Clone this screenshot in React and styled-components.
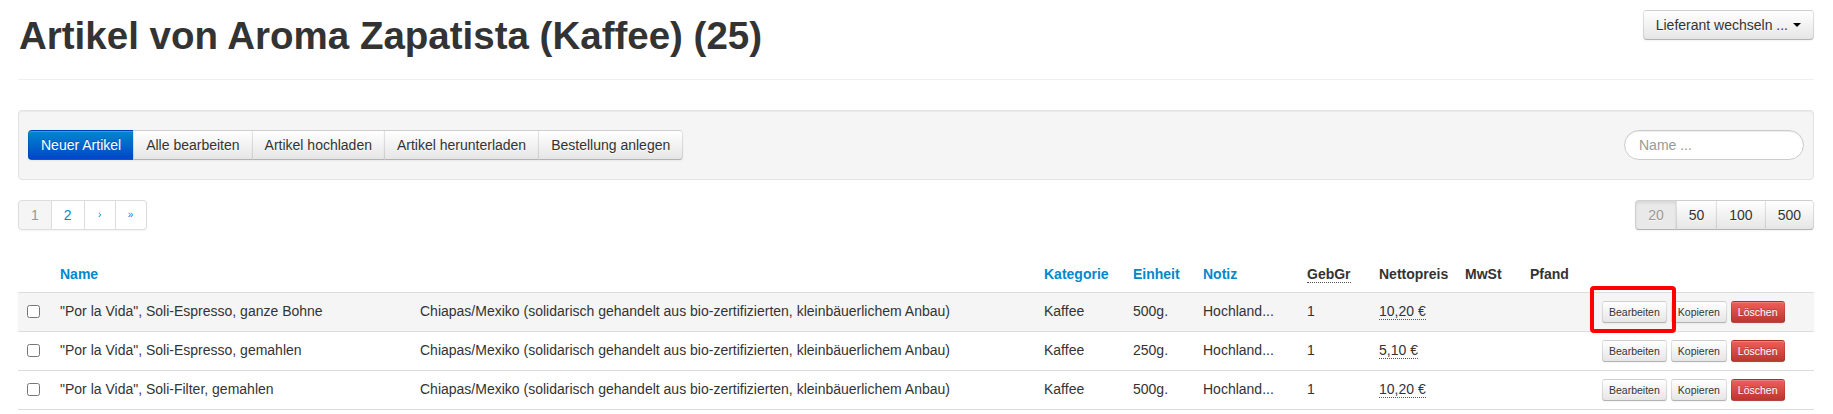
import React from "react";
import styled, { createGlobalStyle, css } from "styled-components";

const GlobalStyle = createGlobalStyle`
  body {
    margin: 0;
    font-family: "Liberation Sans", Arial, Helvetica, sans-serif;
    font-size: 14px;
    line-height: 20px;
    color: #333;
    background: #fff;
  }
`;

const Page = styled.div`
  padding: 0 19px 0 18px;
`;

const Header = styled.div`
  display: flex;
  justify-content: space-between;
  align-items: flex-start;
  padding-bottom: 23px;
  margin-bottom: 30px;
  border-bottom: 1px solid #eee;
`;

const Title = styled.h1`
  margin: 16px 0 0 1px;
  font-size: 38.5px;
  line-height: 40px;
  font-weight: bold;
  color: #333;
`;

const Btn = styled.button`
  display: inline-flex;
  align-items: center;
  gap: 4px;
  font-family: inherit;
  font-size: 14px;
  line-height: 20px;
  padding: 4px 12px;
  color: #333;
  text-shadow: 0 1px 1px rgba(255, 255, 255, 0.75);
  background-color: #f5f5f5;
  background-image: linear-gradient(to bottom, #ffffff, #e6e6e6);
  border: 1px solid #ccc;
  border-color: rgba(0, 0, 0, 0.1) rgba(0, 0, 0, 0.1) rgba(0, 0, 0, 0.25);
  border-bottom-color: #b3b3b3;
  border-radius: 4px;
  box-shadow: inset 0 1px 0 rgba(255, 255, 255, 0.2), 0 1px 2px rgba(0, 0, 0, 0.05);
  white-space: nowrap;
  cursor: pointer;

  ${(p) =>
    p.$variant === "primary" &&
    css`
      color: #fff;
      text-shadow: 0 -1px 0 rgba(0, 0, 0, 0.25);
      background-color: #006dcc;
      background-image: linear-gradient(to bottom, #0088cc, #0044cc);
      border-color: rgba(0, 0, 0, 0.1) rgba(0, 0, 0, 0.1) rgba(0, 0, 0, 0.25);
    `}

  ${(p) =>
    p.$variant === "danger" &&
    css`
      color: #fff;
      text-shadow: 0 -1px 0 rgba(0, 0, 0, 0.25);
      background-color: #da4f49;
      background-image: linear-gradient(to bottom, #ee5f5b, #bd362f);
      border-color: rgba(0, 0, 0, 0.1) rgba(0, 0, 0, 0.1) rgba(0, 0, 0, 0.25);
    `}

  ${(p) =>
    p.$active &&
    css`
      color: #999;
      background-color: #e9e9e9;
      background-image: none;
      box-shadow: inset 0 2px 3px rgba(0, 0, 0, 0.08), 0 1px 2px rgba(0, 0, 0, 0.05);
    `}

  ${(p) =>
    p.$mini &&
    css`
      padding: 0 6px;
      font-size: 10.5px;
      border-radius: 3px;
    `}
`;

const Caret = styled.span`
  display: inline-block;
  width: 0;
  height: 0;
  border-top: 4px solid #000;
  border-left: 4px solid transparent;
  border-right: 4px solid transparent;
  margin-left: 1px;
`;

const SupplierBtn = styled(Btn)`
  margin-top: 10px;
`;

const Group = styled.div`
  display: flex;

  & > * {
    border-radius: 0;
  }
  & > * + * {
    margin-left: -1px;
  }
  & > *:first-child {
    border-top-left-radius: 4px;
    border-bottom-left-radius: 4px;
  }
  & > *:last-child {
    border-top-right-radius: 4px;
    border-bottom-right-radius: 4px;
  }
`;

const Well = styled.div`
  display: flex;
  justify-content: space-between;
  align-items: center;
  padding: 19px 9px;
  margin-bottom: 20px;
  background: #f5f5f5;
  border: 1px solid #e3e3e3;
  border-radius: 4px;
  box-shadow: inset 0 1px 1px rgba(0, 0, 0, 0.05);
`;

const Search = styled.input`
  box-sizing: border-box;
  width: 180px;
  height: 30px;
  padding: 4px 14px;
  font-family: inherit;
  font-size: 14px;
  line-height: 20px;
  color: #555;
  background: #fff;
  border: 1px solid #ccc;
  border-radius: 15px;
  box-shadow: inset 0 1px 1px rgba(0, 0, 0, 0.075);
  outline: none;

  &::placeholder {
    color: #999;
  }
`;

const NavRow = styled.div`
  display: flex;
  justify-content: space-between;
  align-items: center;
  margin-bottom: 26px;
`;

const Pagination = styled.ul`
  display: flex;
  margin: 0;
  padding: 0;
  list-style: none;
  border-radius: 4px;
  box-shadow: 0 1px 2px rgba(0, 0, 0, 0.05);
`;

const PageLink = styled.li`
  height: 20px;
  padding: 4px 12px;
  line-height: 20px;
  border: 1px solid #ddd;
  border-left-width: 0;
  font-size: ${(p) => (p.$arrow ? "10px" : "14px")};
  min-width: ${(p) => (p.$arrow ? "6px" : "auto")};
  text-align: center;
  color: ${(p) => (p.$active ? "#999" : "#0088cc")};
  background: ${(p) => (p.$active ? "#f5f5f5" : "#fff")};

  &:first-child {
    border-left-width: 1px;
    border-radius: 4px 0 0 4px;
  }
  &:last-child {
    border-radius: 0 4px 4px 0;
  }
`;

const Table = styled.table`
  width: 100%;
  border-collapse: collapse;
  table-layout: fixed;
`;

const Th = styled.th`
  padding: 8px;
  text-align: left;
  vertical-align: bottom;
  font-weight: bold;
  color: ${(p) => (p.$link ? "#0088cc" : "#333")};
  white-space: nowrap;
`;

const Row = styled.tr`
  background: ${(p) => (p.$highlight ? "#f5f5f5" : "transparent")};
  border-top: 1px solid #ddd;
  border-bottom: 1px solid #ddd;
`;

const Td = styled.td`
  padding: 8px;
  vertical-align: top;
  white-space: nowrap;
  overflow: visible;
`;

const Check = styled.input`
  display: block;
  width: 13px;
  height: 13px;
  margin: 4px 0 0 1px;
`;

const Abbr = styled.abbr`
  text-decoration: none;
  border-bottom: 1px dotted #555;
  cursor: help;
`;

const Actions = styled.div`
  display: flex;
  align-items: center;
  gap: 4px;
  height: 22px;
`;

const Highlight = styled.span`
  position: relative;
  display: flex;

  &::after {
    content: "";
    position: absolute;
    top: -15px;
    left: -12px;
    right: -9px;
    bottom: -10px;
    border: 4px solid #ff0000;
    border-radius: 4px;
    pointer-events: none;
  }
`;

const widths = [34, 360, 624, 89, 70, 104, 72, 86, 65, 72, 220];

const origin =
  "Chiapas/Mexiko (solidarisch gehandelt aus bio-zertifizierten, kleinbäuerlichem Anbau)";

const articles = [
  { name: "\"Por la Vida\", Soli-Espresso, ganze Bohne", unit: "500g.", price: "10,20 €" },
  { name: "\"Por la Vida\", Soli-Espresso, gemahlen", unit: "250g.", price: "5,10 €" },
  { name: "\"Por la Vida\", Soli-Filter, gemahlen", unit: "500g.", price: "10,20 €" },
];

export default function App() {
  return (
    <Page>
      <GlobalStyle />
      <Header>
        <Title>Artikel von Aroma Zapatista (Kaffee) (25)</Title>
        <SupplierBtn>
          Lieferant wechseln ... <Caret />
        </SupplierBtn>
      </Header>

      <Well>
        <Group>
          <Btn $variant="primary">Neuer Artikel</Btn>
          <Btn>Alle bearbeiten</Btn>
          <Btn>Artikel hochladen</Btn>
          <Btn>Artikel herunterladen</Btn>
          <Btn>Bestellung anlegen</Btn>
        </Group>
        <Search placeholder="Name ..." />
      </Well>

      <NavRow>
        <Pagination>
          <PageLink $active>1</PageLink>
          <PageLink>2</PageLink>
          <PageLink $arrow>›</PageLink>
          <PageLink $arrow>»</PageLink>
        </Pagination>
        <Group>
          <Btn $active>20</Btn>
          <Btn>50</Btn>
          <Btn>100</Btn>
          <Btn>500</Btn>
        </Group>
      </NavRow>

      <Table>
        <colgroup>
          {widths.map((w, i) => (
            <col key={i} style={{ width: w }} />
          ))}
        </colgroup>
        <thead>
          <tr>
            <Th />
            <Th $link>Name</Th>
            <Th />
            <Th $link>Kategorie</Th>
            <Th $link>Einheit</Th>
            <Th $link>Notiz</Th>
            <Th>
              <Abbr title="Gebindegröße">GebGr</Abbr>
            </Th>
            <Th>Nettopreis</Th>
            <Th>MwSt</Th>
            <Th>Pfand</Th>
            <Th />
          </tr>
        </thead>
        <tbody>
          {articles.map((a, i) => {
            const edit = <Btn $mini>Bearbeiten</Btn>;
            return (
              <Row key={i} $highlight={i === 0}>
                <Td>
                  <Check type="checkbox" />
                </Td>
                <Td>{a.name}</Td>
                <Td>{origin}</Td>
                <Td>Kaffee</Td>
                <Td>{a.unit}</Td>
                <Td>Hochland...</Td>
                <Td>1</Td>
                <Td>
                  <Abbr title="Bruttopreis">{a.price}</Abbr>
                </Td>
                <Td />
                <Td />
                <Td>
                  <Actions>
                    {i === 0 ? <Highlight>{edit}</Highlight> : edit}
                    <Btn $mini>Kopieren</Btn>
                    <Btn $mini $variant="danger">Löschen</Btn>
                  </Actions>
                </Td>
              </Row>
            );
          })}
        </tbody>
      </Table>
    </Page>
  );
}
